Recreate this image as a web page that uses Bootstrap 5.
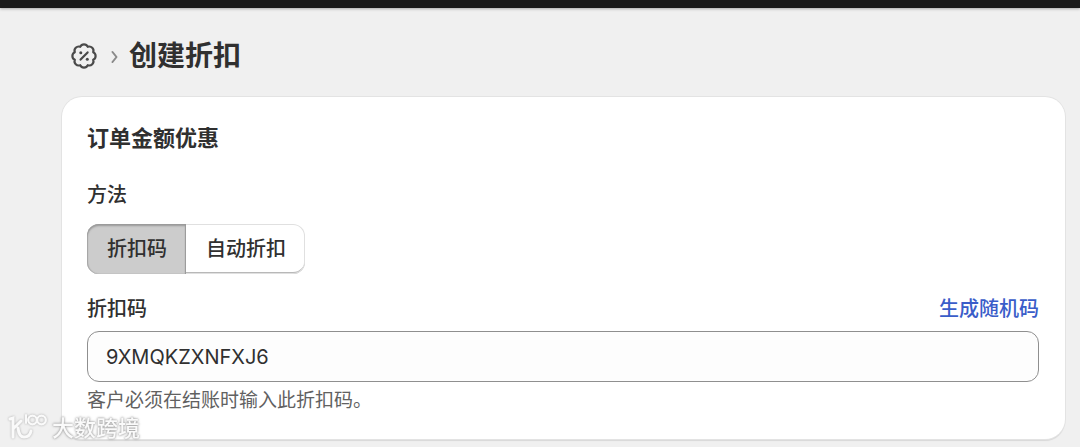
<!DOCTYPE html>
<html lang="zh-CN">
<head>
<meta charset="utf-8">
<meta name="viewport" content="width=device-width, initial-scale=1">
<title>创建折扣</title>
<link href="https://cdn.jsdelivr.net/npm/bootstrap@5.3.0/dist/css/bootstrap.min.css" rel="stylesheet">
<style>
  body { background: #f0f0f0; color: #303030; font-family: Inter, "Noto Sans CJK SC", sans-serif; font-size: 20px; line-height: 28px; overflow-x: hidden; }
  .top-strip { height: 8px; background: #1a1a1a; box-shadow: 0 1px 3px rgba(0,0,0,.3); }
  .page-body { padding: 28px 15px 8px 62px; }
  .page-head { height: 40px; padding-left: 9px; }
  .page-title { font-size: 28px; line-height: 40px; font-weight: 700; }
  .crumb-arrow { margin: 0 10px 0 14px; }
  .panel { margin-top: 21px; padding: 25px 26px 24px 25px; border-radius: 20px; background: #fff; box-shadow: 0 0 0 1px #e3e3e3, 0 2px 1px rgba(0,0,0,.1); }
  .panel-title { font-size: 22px; line-height: 32px; font-weight: 700; }
  .label-text { font-size: 20px; line-height: 28px; font-weight: 500; }
  .method-label { margin-top: 27px; }
  .segments { margin: 15px 0 21px; height: 50px; border-radius: 12px; box-shadow: inset 0 0 0 1px #e0e0e0, inset 0 -2px 0 #b8b8b8; }
  .segments .btn { border: 0; padding: 0 19px 0 20px; font-size: 20px; line-height: 50px; font-weight: 500; color: #303030; border-radius: 12px; }
  .segments .seg-on { background: #ccc; box-shadow: inset 0 2px 2px #999, inset -1px 0 1px #999, inset 1px 0 1px #aaa; }
  .random-link { font-size: 20px; font-weight: 500; color: #3a5dc9; text-decoration: none; }
  .code-input { height: 51px; margin-top: 8px; padding: 0 18px; border: 1px solid #8f8f8f; border-radius: 12px; background: #fdfdfd; color: #303030; font-size: 20px; }
  .help { margin-top: 5px; font-size: 19px; line-height: 28px; color: #616161; }
  .watermark { left: 8px; bottom: 4px; color: #fafafa; font-size: 22px; line-height: 30px; font-weight: 500; text-shadow: 0 0 2px #999, 0 0 3px #aaa; pointer-events: none; }
  .watermark svg { filter: drop-shadow(0 0 1px #aaa); }
</style>
<script src="https://cdn.jsdelivr.net/npm/bootstrap@5.3.0/dist/js/bootstrap.bundle.min.js"></script>
</head>
<body>
<div class="top-strip"></div>
<main class="page-body">
  <header class="page-head d-flex align-items-center">
    <svg width="26" height="26" viewBox="0 0 26 26" fill="none" stroke="#4a4a4a" stroke-width="2.2" stroke-linecap="round" stroke-linejoin="round" aria-hidden="true">
      <path d="M9.2 3.8A4.2 4.2 0 0 1 16.8 3.8A4.2 4.2 0 0 1 22.2 9.2A4.2 4.2 0 0 1 22.2 16.8A4.2 4.2 0 0 1 16.8 22.2A4.2 4.2 0 0 1 9.2 22.2A4.2 4.2 0 0 1 3.8 16.8A4.2 4.2 0 0 1 3.8 9.2A4.2 4.2 0 0 1 9.2 3.8Z"/>
      <path d="M9.6 16.6L16.6 9.4"/>
      <circle cx="9.8" cy="9.8" r="1.5" fill="#4a4a4a" stroke="none"/><circle cx="16.3" cy="16.2" r="1.5" fill="#4a4a4a" stroke="none"/>
    </svg>
    <svg class="crumb-arrow" width="8" height="14" viewBox="0 0 8 14" fill="none" stroke="#8a8a8a" stroke-width="2" stroke-linecap="round" stroke-linejoin="round" aria-hidden="true"><path d="M1.5 3L5.5 8L1.5 13"/></svg>
    <h1 class="page-title mb-0">创建折扣</h1>
  </header>
  <section class="panel">
    <h2 class="panel-title mb-0">订单金额优惠</h2>
    <div class="label-text method-label" id="method">方法</div>
    <div class="segments d-inline-flex" role="group" aria-labelledby="method">
      <button type="button" class="btn seg-on rounded-end-0" aria-pressed="true">折扣码</button>
      <button type="button" class="btn" aria-pressed="false">自动折扣</button>
    </div>
    <div class="d-flex justify-content-between">
      <label class="label-text" for="code">折扣码</label>
      <a class="random-link" href="#">生成随机码</a>
    </div>
    <input class="form-control code-input" type="text" id="code" value="9XMQKZXNFXJ6" aria-describedby="code-help">
    <div class="help" id="code-help">客户必须在结账时输入此折扣码。</div>
  </section>
</main>
<div class="watermark position-fixed d-flex align-items-center">
  <svg class="me-1" width="40" height="30" viewBox="0 0 40 30" fill="none" stroke="#fafafa" stroke-width="3" stroke-linecap="round" aria-hidden="true">
    <path d="M2 6L5 5V24M13 8L6 15M10 15Q11 24 16 24Q22 24 23 18" />
    <path d="M18 2V10" stroke-width="2"/><circle cx="24.500" cy="7" r="4.300" stroke-width="2.300"/><circle cx="33.500" cy="7" r="4.300" stroke-width="2.300"/>
  </svg>
  <span>大数跨境</span>
</div>
</body>
</html>
